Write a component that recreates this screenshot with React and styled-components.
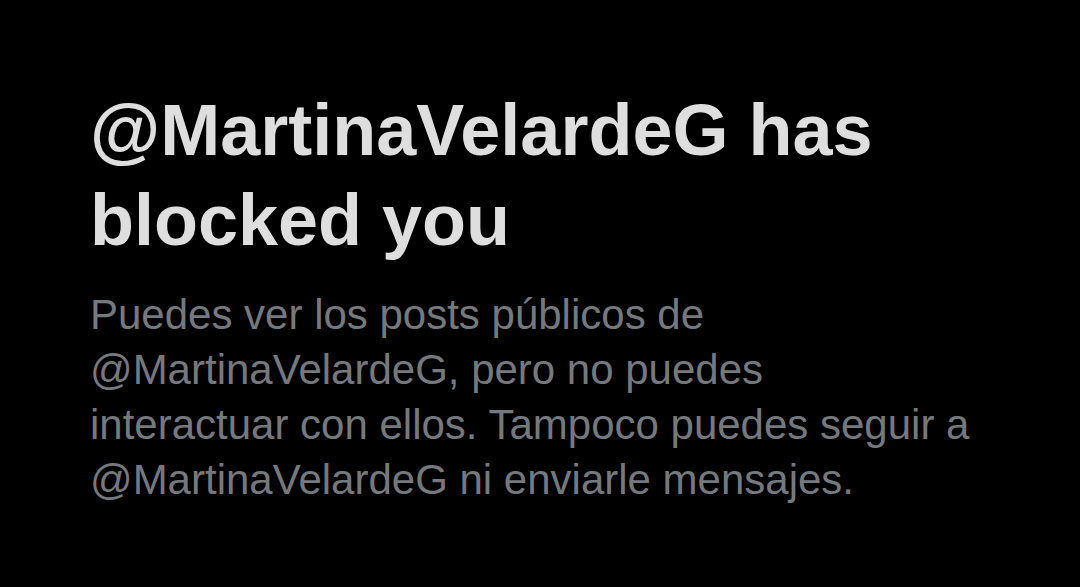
import React from "react";
import styled, { createGlobalStyle } from "styled-components";

const GlobalStyle = createGlobalStyle`
  html, body {
    margin: 0;
    padding: 0;
    background: #000000;
  }
`;

const lines = [
  "Puedes ver los posts públicos de",
  "@MartinaVelardeG, pero no puedes",
  "interactuar con ellos. Tampoco puedes seguir a",
  "@MartinaVelardeG ni enviarle mensajes.",
];

export default function App() {
  return (
    <>
      <GlobalStyle />
      <StyledPage>
        <StyledNotice>
          <StyledTitle>
            @MartinaVelardeG has
            <br />
            blocked you
          </StyledTitle>
          <StyledText>
            {lines.map((line) => (
              <StyledLine key={line}>{line}</StyledLine>
            ))}
          </StyledText>
        </StyledNotice>
      </StyledPage>
    </>
  );
}

const StyledPage = styled.div`
  width: 1080px;
  height: 587px;
  background: #000000;
  box-sizing: border-box;
  padding: 85px 0 0 90px;
  overflow: hidden;
`;

const StyledNotice = styled.div`
  display: flex;
  flex-direction: column;
  gap: 22px;
`;

const StyledTitle = styled.h1`
  margin: 0;
  font-family: "Liberation Sans", Arial, sans-serif;
  font-weight: 700;
  font-size: 72px;
  line-height: 90px;
  color: #dedede;
  white-space: nowrap;
`;

const StyledText = styled.p`
  margin: 0;
  font-family: "Liberation Sans", Arial, sans-serif;
  font-weight: 400;
  font-size: 42px;
  line-height: 55px;
  color: #75797e;
`;

const StyledLine = styled.span`
  display: block;
  white-space: nowrap;
`;
